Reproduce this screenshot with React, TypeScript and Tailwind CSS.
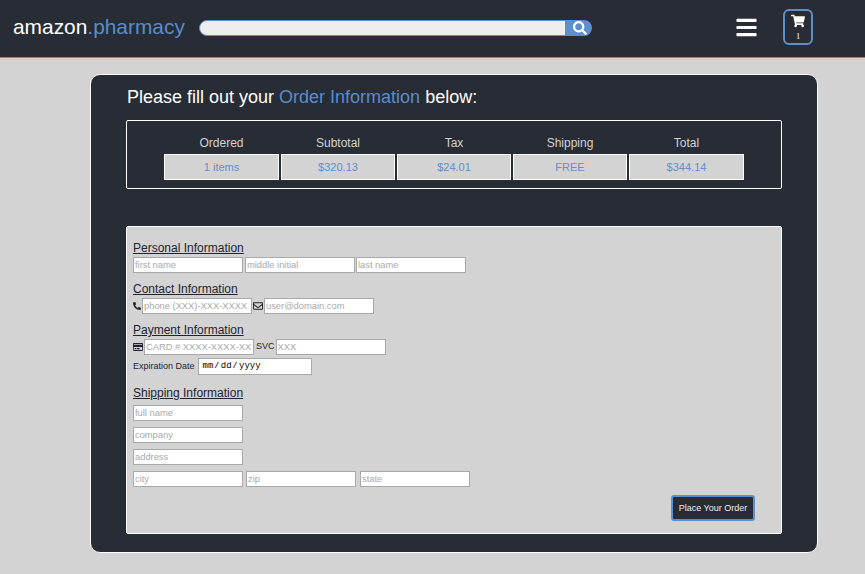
import React from "react";
import { FaBars, FaPhone, FaRegCreditCard, FaRegEnvelope, FaSearch, FaShoppingCart } from "react-icons/fa";

const inputClass =
  "box-content h-[14px] border border-[#a9a9a9] bg-white px-px text-[9.33px] leading-none text-black outline-none placeholder:text-[#a9a9a9]";

function Field({ placeholder, className = "" }: { placeholder: string; className?: string }) {
  return <input placeholder={placeholder} className={`${inputClass} w-[106px] ${className}`} />;
}

function Heading({ children }: { children: React.ReactNode }) {
  return <h2 className="h-[14px] text-[12px] leading-[14px] text-[#1f2430] underline">{children}</h2>;
}

const cols = [
  ["Ordered", "1 items", "w-[115px]"],
  ["Subtotal", "$320.13", "w-[114px]"],
  ["Tax", "$24.01", "w-[114px]"],
  ["Shipping", "FREE", "w-[114px]"],
  ["Total", "$344.14", "w-[115px]"],
];

export default function App() {
  return (
    <div className="h-[574px] w-[865px] overflow-hidden bg-[#d3d3d3] font-['Liberation_Sans',sans-serif]">
      <header className="flex h-[58px] items-center border-b border-[#5f8fca] bg-[#282c34] pl-[13px]">
        <div className="-mt-[3px] w-[186px] text-[20.9px] leading-none text-white">
          amazon<span className="text-[#5a8ccb]">.pharmacy</span>
        </div>
        <div className="-mt-[2px] flex h-[16px] w-[393px]">
          <div className="h-[16px] w-[367px] rounded-l-full border border-[#5f8fca] bg-[#eeeeee]" />
          <div className="flex h-[16px] w-[26px] items-center justify-center rounded-r-full bg-[#5f8fca] pl-px text-white">
            <FaSearch size={14} />
          </div>
        </div>
        <FaBars size={23} className="ml-[143px] -mt-[2px] text-white" />
        <div className="-mt-[3px] ml-[25px] flex h-[36px] w-[30px] flex-col items-center rounded-md border-2 border-[#5f8fca] pt-[3px] text-white">
          <FaShoppingCart size={14} />
          <span className="mt-[4px] font-['Liberation_Serif',serif] text-[8.5px] leading-none">1</span>
        </div>
      </header>

      <main className="ml-[90px] mt-[16px] h-[479px] w-[728px] rounded-[10px] border border-white bg-[#282c34] px-[35px]">
        <h1 className="ml-[1px] pt-[12px] text-[18px] leading-[21px] text-white">
          Please fill out your <span className="text-[#5a8ccb]">Order Information</span> below:
        </h1>

        <section className="mt-[12px] h-[69px] w-[656px] rounded-[2px] border border-white pl-[37px] pt-[14px]">
          <div className="flex gap-[2px]">
            {cols.map(([label, value, width]) => (
              <div key={label} className={`${width} text-center`}>
                <div className="h-[19px] text-[12px] leading-[16px] text-[#d3d3d3]">{label}</div>
                <div className="h-[26px] border border-white bg-[#d3d3d3] text-[11px] leading-[24px] text-[#5f8fca]">
                  {value}
                </div>
              </div>
            ))}
          </div>
        </section>

        <section className="mt-[37px] h-[308px] w-[656px] rounded-[2px] border border-white bg-[#d3d3d3] pl-[6px] pt-[14px]">
          <Heading>Personal Information</Heading>
          <div className="mt-[2px] flex">
            <Field placeholder="first name" />
            <Field placeholder="middle initial" className="ml-[2px]" />
            <Field placeholder="last name" className="ml-px" />
          </div>

          <div className="mt-[9px]">
            <Heading>Contact Information</Heading>
          </div>
          <div className="mt-[2px] flex items-center">
            <FaPhone size={8} className="mr-px -scale-x-100 text-[#1f2430]" />
            <Field placeholder="phone (XXX)-XXX-XXXX" />
            <FaRegEnvelope size={10} className="mx-px text-[#1f2430]" />
            <Field placeholder="user@domain.com" />
          </div>

          <div className="mt-[9px]">
            <Heading>Payment Information</Heading>
          </div>
          <div className="mt-[2px] flex items-center">
            <FaRegCreditCard size={10} className="mr-px text-[#1f2430]" />
            <Field placeholder="CARD # XXXX-XXXX-XXXX-XXXX" />
            <span className="ml-[2px] mr-px text-[9px] text-[#1f2430]">SVC</span>
            <Field placeholder="XXX" />
          </div>
          <div className="mt-[3px] flex items-center">
            <span className="mr-[3px] text-[9px] text-[#1f2430]">Expiration Date</span>
            <input
              type="date"
              className="box-content h-[13px] w-[106px] border border-[#a9a9a9] bg-white px-[3px] py-px font-['Liberation_Mono',monospace] text-[9px] leading-none text-black outline-none [&::-webkit-calendar-picker-indicator]:hidden"
            />
          </div>

          <div className="mt-[11px]">
            <Heading>Shipping Information</Heading>
          </div>
          <div className="mt-[5px] flex flex-col gap-[6px]">
            <Field placeholder="full name" />
            <Field placeholder="company" />
            <Field placeholder="address" />
            <div className="flex">
              <Field placeholder="city" />
              <Field placeholder="zip" className="ml-[3px]" />
              <Field placeholder="state" className="ml-[4px]" />
            </div>
          </div>
          <div className="flex justify-end pr-[26px]">
            <button className="mt-[8px] h-[26px] w-[84px] rounded-[3px] border-2 border-[#5f8fca] bg-[#282c34] pt-px text-[9px] leading-none text-[#eeeeee]">
              Place Your Order
            </button>
          </div>
        </section>
      </main>
    </div>
  );
}
